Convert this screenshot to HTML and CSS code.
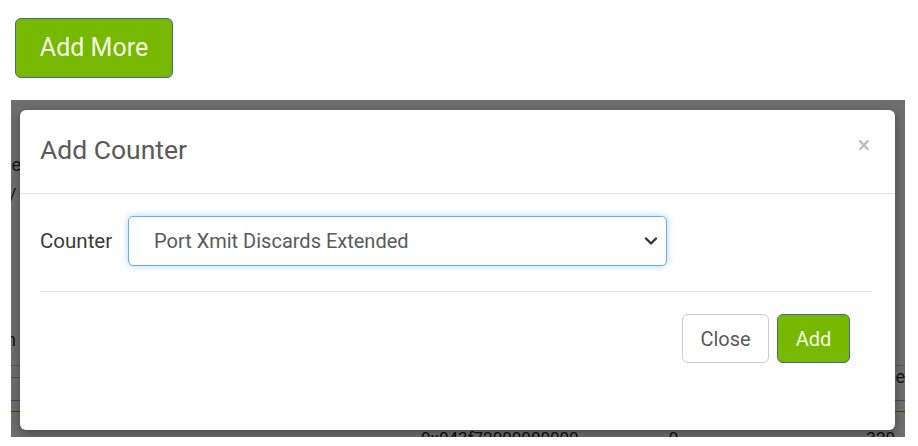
FILE: index.html
```html
<!DOCTYPE html>
<html>
<head>
<meta charset="utf-8">
<link rel="stylesheet" href="styles.css">
</head>
<body>
<div class="toolbar">
  <button class="btn btn-green btn-more">Add More</button>
</div>
<div class="page-area">
  <div class="bg-page">
    <div class="bg-line bg-l1">Name</div>
    <div class="bg-line bg-l2">/</div>
    <div class="bg-line bg-l3">Column</div>
    <div class="bg-table">
      <div class="bg-row bg-head"><span></span><span class="bg-right">Value</span></div>
      <div class="bg-row bg-sel"><span></span><span></span></div>
      <div class="bg-row bg-data"><span class="bg-guid">0x043f72000000000</span><span class="bg-num">0</span><span class="bg-num2">320</span></div>
    </div>
  </div>
  <div class="backdrop"></div>
  <div class="modal">
    <div class="modal-header">
      <h4 class="modal-title">Add Counter</h4>
      <span class="close">&times;</span>
    </div>
    <div class="modal-body">
      <div class="form-row">
        <label class="label">Counter</label>
        <div class="select">
          <span class="select-text">Port Xmit Discards Extended</span>
          <svg class="chev" width="14" height="10" viewBox="0 0 14 10"><path d="M2 2.5 L7 7.5 L12 2.5" fill="none" stroke="#333" stroke-width="2.4" stroke-linecap="round" stroke-linejoin="round"/></svg>
        </div>
      </div>
      <div class="rule"></div>
    </div>
    <div class="modal-footer">
      <button class="btn btn-default">Close</button>
      <button class="btn btn-green btn-add">Add</button>
    </div>
  </div>
</div>
</body>
</html>
```
FILE: styles.css
```css
* { box-sizing: border-box; }
html, body { margin: 0; padding: 0; background: #fff; }
body {
  font-family: Roboto, "Liberation Sans", sans-serif;
  width: 918px;
  height: 446px;
  overflow: hidden;
}
.toolbar {
  padding: 18px 0 0 15px;
  height: 100px;
}
.btn {
  font-family: Roboto, "Liberation Sans", sans-serif;
  cursor: pointer;
  border-radius: 6px;
  padding: 0;
}
.btn-green {
  background: #76b900;
  border: 1.5px solid #3f6b86;
  color: #f4fbe4;
}
.btn-more {
  width: 158px;
  height: 60px;
  font-size: 25px;
  padding-bottom: 2px;
}
.page-area {
  position: relative;
  margin-left: 11px;
  width: 894px;
  height: 337px;
  overflow: hidden;
  background: #fff;
}
.bg-page {
  padding-top: 50px;
  font-size: 18px;
  color: #333;
}
.bg-line { height: 30px; line-height: 30px; }
.bg-l1 { margin-left: -38px; }
.bg-l2 { margin-left: -2px; }
.bg-l3 { margin-left: -57px; margin-top: 115px; }
.bg-table { margin-top: 10px; }
.bg-row { display: flex; border-top: 1px solid #ccc; }
.bg-head { height: 12px; }
.bg-head .bg-right { margin-left: auto; }
.bg-row.bg-sel { border-bottom: 1px solid #aaa; height: 24px; border-top: 1px solid #bbb; }
.bg-data {
  margin-top: 10px;
  border-top: 1px solid #76b900;
  height: 30px;
  padding-top: 16px;
  font-size: 17px;
  color: #222;
}
.bg-guid { margin-left: 410px; }
.bg-num { margin-left: 90px; }
.bg-num2 { margin-left: auto; margin-right: 10px; }
.backdrop {
  position: absolute;
  inset: 0;
  background: rgba(0, 0, 0, 0.57);
}
.modal {
  position: absolute;
  left: 9px;
  top: 10px;
  width: 875px;
  height: 320px;
  background: #fff;
  border-radius: 6px;
  box-shadow: 0 3px 10px rgba(0, 0, 0, 0.35);
  display: flex;
  flex-direction: column;
}
.modal-header {
  height: 84px;
  border-bottom: 1px solid #e5e5e5;
  display: flex;
  align-items: center;
  justify-content: space-between;
  padding: 0 25px 0 20px;
}
.modal-title {
  margin: 0;
  font-weight: 400;
  font-size: 26.5px;
  color: #5a5a5a;
  padding-bottom: 4px;
}
.close {
  font-size: 23px;
  color: #b5b5b5;
  line-height: 1;
  padding-bottom: 12px;
}
.modal-body {
  padding: 22px 23px 0 20px;
}
.form-row {
  display: flex;
  align-items: center;
  gap: 15px;
}
.label {
  font-size: 20.5px;
  color: #3a3a3a;
  width: 73px;
  white-space: nowrap;
}
.select {
  width: 539px;
  height: 50px;
  border: 1px solid #66afe9;
  border-radius: 5px;
  box-shadow: 0 0 7px rgba(102, 175, 233, 0.55);
  display: flex;
  align-items: center;
  justify-content: space-between;
  padding: 0 8px 0 25px;
}
.select-text {
  font-size: 20px;
  color: #5a5a5a;
}
.chev { display: block; }
.rule {
  margin-top: 25px;
  border-top: 1px solid #e5e5e5;
}
.modal-footer {
  display: flex;
  justify-content: flex-end;
  gap: 8px;
  padding: 22px 45px 0 0;
}
.btn-default {
  width: 87px;
  height: 49px;
  background: #fff;
  border: 1px solid #ccc;
  color: #5a5a5a;
  font-size: 20px;
}
.btn-add {
  width: 73px;
  height: 49px;
  font-size: 20px;
}
```
